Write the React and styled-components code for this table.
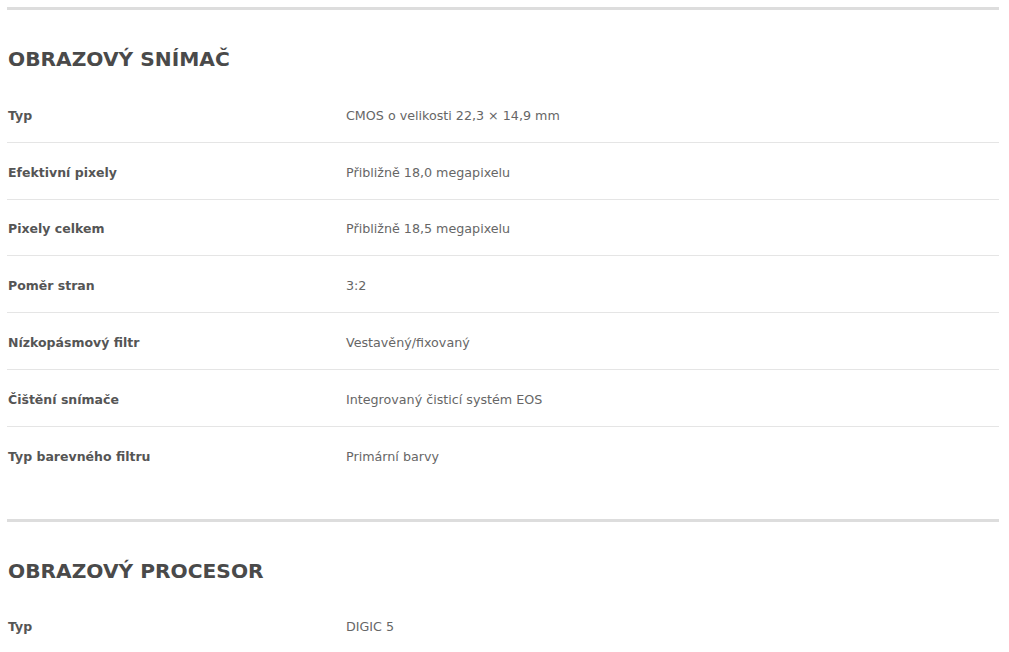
import React from "react";
import styled, { createGlobalStyle } from "styled-components";

const GlobalStyle = createGlobalStyle`
  html, body { margin: 0; padding: 0; background: #fff; }
  body { font-family: "DejaVu Sans", "Open Sans", sans-serif; }
`;

const Page = styled.div`
  padding: 7px 10px 0 7px;
`;

const Section = styled.section`
  border-top: 3px solid #dddddd;
  padding-bottom: 36px;
`;

const Heading = styled.h2`
  margin: 37px 0 15px 1px;
  font-family: "DejaVu Sans", sans-serif;
  font-weight: 700;
  font-size: 20.2px;
  line-height: 24px;
  letter-spacing: 0px;
  color: #4a4a4a;
  text-transform: uppercase;
`;

const Rows = styled.div`
  display: flex;
  flex-direction: column;
`;

const Row = styled.div`
  display: grid;
  grid-template-columns: 339px 1fr;
  align-items: center;
  box-sizing: content-box;
  min-height: 52.8px;
  padding-top: 3px;
  border-bottom: ${(p) => (p.$last ? "none" : "1px solid #e5e5e5")};
`;

const Label = styled.div`
  padding-left: 1px;
  font-family: "DejaVu Sans", sans-serif;
  font-weight: 700;
  font-size: 12.5px;
  color: #555;
`;

const Value = styled.div`
  font-family: "DejaVu Sans", sans-serif;
  font-weight: 400;
  font-size: 12.7px;
  color: #666;
`;

const sections = [
  {
    title: "Obrazový snímač",
    rows: [
      ["Typ", "CMOS o velikosti 22,3 × 14,9 mm"],
      ["Efektivní pixely", "Přibližně 18,0 megapixelu"],
      ["Pixely celkem", "Přibližně 18,5 megapixelu"],
      ["Poměr stran", "3:2"],
      ["Nízkopásmový filtr", "Vestavěný/fixovaný"],
      ["Čištění snímače", "Integrovaný čisticí systém EOS"],
      ["Typ barevného filtru", "Primární barvy"],
    ],
  },
  {
    title: "Obrazový procesor",
    rows: [["Typ", "DIGIC 5"]],
  },
];

export default function App() {
  return (
    <>
      <GlobalStyle />
      <Page>
        {sections.map((s) => (
          <Section key={s.title}>
            <Heading>{s.title}</Heading>
            <Rows>
              {s.rows.map(([k, v], i) => (
                <Row key={k + i} $last={i === s.rows.length - 1}>
                  <Label>{k}</Label>
                  <Value>{v}</Value>
                </Row>
              ))}
            </Rows>
          </Section>
        ))}
      </Page>
    </>
  );
}
